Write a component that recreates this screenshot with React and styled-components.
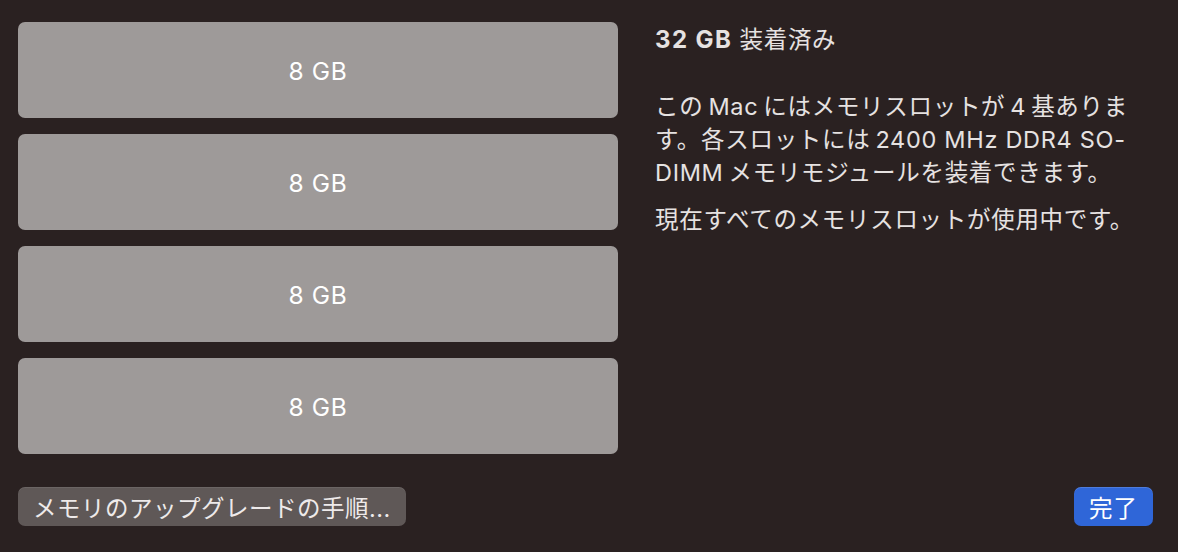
import React from "react";
import styled, { createGlobalStyle } from "styled-components";

const Global = createGlobalStyle`
  html, body { margin: 0; padding: 0; background: #2a2121; }
  body { font-family: Inter, "Noto Sans CJK JP", sans-serif; -webkit-font-smoothing: antialiased; }
`;

const Page = styled.div`
  width: 1178px;
  height: 552px;
  box-sizing: border-box;
  background: #2a2121;
  padding: 22px 25px 26px 18px;
  display: grid;
  grid-template-columns: 600px 1fr;
  grid-template-rows: 1fr auto;
  column-gap: 37px;
`;

const Slots = styled.div`
  display: flex;
  flex-direction: column;
  gap: 16px;
`;

const Slot = styled.div`
  height: 96px;
  border-radius: 7px;
  background: #9e9a99;
  display: flex;
  align-items: center;
  justify-content: center;
  color: #ffffff;
  font-size: 24.5px;
  letter-spacing: 0.6px;
  padding-top: 1px;
  box-sizing: border-box;
`;

const Info = styled.div`
  color: #e6e2e1;
  font-size: 23.5px;
  letter-spacing: 0.7px;
  padding-top: 3px;
`;

const Heading = styled.div`
  line-height: 30px;
  margin-bottom: 35px;
  b { font-weight: 700; letter-spacing: 1.4px; font-size: 24px; }
`;

const Para = styled.p`
  margin: 0 0 14px 0;
  line-height: 33px;
  white-space: nowrap;
`;

const Footer = styled.div`
  grid-column: 1 / span 2;
  display: flex;
  justify-content: space-between;
  align-items: center;
  padding-top: 32px;
`;

const Button = styled.button`
  height: 39px;
  border: none;
  border-radius: 7px;
  padding: 0 ${p => p.$pad}px;
  background: ${p => (p.$primary ? "#2f66d8" : "#5f5857")};
  color: ${p => (p.$primary ? "#ffffff" : "#eeeaea")};
  font-family: Inter, "Noto Sans CJK JP", sans-serif;
  font-size: 23.5px;
  letter-spacing: ${p => (p.$primary ? 1 : 0.5)}px;
  display: flex;
  align-items: center;
  box-shadow: ${p => (p.$primary ? "inset 0 1px 0 rgba(255,255,255,0.15)" : "inset 0 1px 0 rgba(255,255,255,0.08)")};
`;

export default function App() {
  return (
    <>
      <Global />
      <Page>
        <Slots>
          {[0, 1, 2, 3].map(i => (
            <Slot key={i}>8 GB</Slot>
          ))}
        </Slots>
        <Info>
          <Heading>
            <b>32 GB</b> 装着済み
          </Heading>
          <Para>
            この{"\u2009"}Mac{"\u2009"}にはメモリスロットが{"\u2009"}4{"\u2009"}基ありま
            <br />
            す。各スロットには{"\u2009"}2400 MHz DDR4 SO-
            <br />
            DIMM{"\u2009"}メモリモジュールを装着できます。
          </Para>
          <Para>現在すべてのメモリスロットが使用中です。</Para>
        </Info>
        <Footer>
          <Button $pad={15}>メモリのアップグレードの手順...</Button>
          <Button $primary $pad={15}>完了</Button>
        </Footer>
      </Page>
    </>
  );
}
